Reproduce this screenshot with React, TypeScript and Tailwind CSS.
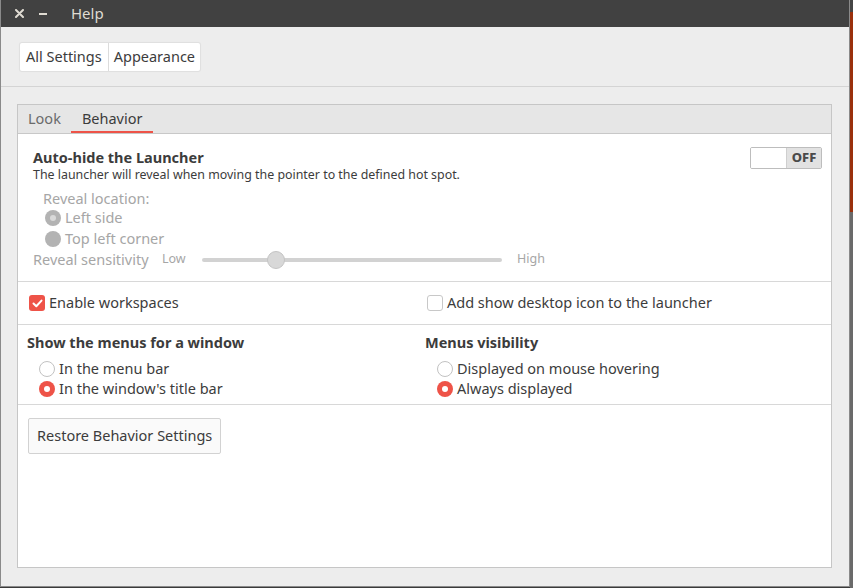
import React from "react";

const font = { fontFamily: '"Noto Sans", "Open Sans", sans-serif' };

function Radio({ checked, disabled }: { checked?: boolean; disabled?: boolean }) {
  if (disabled) {
    return (
      <span className="flex h-[16px] w-[16px] items-center justify-center rounded-full bg-[#b3b3b3]">
        {checked && <span className="h-[6px] w-[6px] rounded-full bg-[#d9d9d9]" />}
      </span>
    );
  }
  if (checked) {
    return (
      <span className="flex h-[16px] w-[16px] items-center justify-center rounded-full bg-[#ee5348]">
        <span className="h-[6px] w-[6px] rounded-full bg-white" />
      </span>
    );
  }
  return <span className="h-[16px] w-[16px] rounded-full border border-[#c2c2c2] bg-white" />;
}

function Checkbox({ checked }: { checked?: boolean }) {
  if (checked) {
    return (
      <span className="flex h-[16px] w-[16px] items-center justify-center rounded-[3px] bg-[#ee5348]">
        <svg width="11" height="9" viewBox="0 0 11 9">
          <path d="M1.5 4.5 L4.3 7.2 L9.5 1.6" stroke="white" strokeWidth="2" fill="none" strokeLinecap="round" strokeLinejoin="round" />
        </svg>
      </span>
    );
  }
  return <span className="h-[16px] w-[16px] rounded-[3px] border border-[#c8c8c8] bg-white" />;
}

export default function App() {
  return (
    <div className="flex h-[588px] w-[853px] bg-[#3a3a3a] text-[#3c3c3c]" style={font}>
      <div className="flex h-[587px] w-[850px] flex-col border-l border-r border-b border-[#8a8a8a] bg-[#ededed]">
        {/* title bar */}
        <div className="flex h-[27px] items-center bg-[#414141] text-[#dfdbd2]">
          <svg className="ml-[14px]" width="9" height="9" viewBox="0 0 9 9">
            <path d="M1 1 L8 8 M8 1 L1 8" stroke="#dfdbd2" strokeWidth="2" strokeLinecap="round" />
          </svg>
          <span className="ml-[15px] h-[2px] w-[8px] bg-[#dfdbd2]" />
          <span className="ml-[24px] text-[15px] leading-none">Help</span>
        </div>
        {/* header */}
        <div className="flex h-[60px] items-start border-b border-[#d4d4d4] pl-[19px] pt-[16px]">
          <div className="flex h-[28px] rounded-[2px] bg-white text-[14.5px] shadow-[0_0_1px_1px_rgba(0,0,0,0.06)]">
            <span className="flex items-center border-r border-[#dcdcdc] px-[6px]">All Settings</span>
            <span className="flex items-center px-[5px]">Appearance</span>
          </div>
        </div>
        {/* notebook */}
        <div className="ml-[16px] mt-[17px] flex h-[464px] w-[815px] flex-col border border-[#c6c6c6] bg-white">
          <div className="flex h-[29px] border-b border-[#c8c8c8] bg-[#e6e6e6] text-[14.5px]">
            <span className="flex items-center px-[10px] text-[#6b6b6b]">Look</span>
            <span className="flex items-center border-b-2 border-[#ee5348] px-[11px] pt-[2px]">Behavior</span>
          </div>
          {/* section 1 */}
          <div className="flex h-[148px] flex-col border-b border-[#d8d8d8] pl-[15px] pr-[9px] pt-[13px]">
            <div className="flex items-start justify-between">
              <div className="flex flex-col">
                <span className="text-[14.5px] font-bold leading-[20px]">Auto-hide the Launcher</span>
                <span className="text-[12.4px] leading-[15px]">The launcher will reveal when moving the pointer to the defined hot spot.</span>
              </div>
              <div className="flex h-[22px] w-[72px] overflow-hidden rounded-[2px] border border-[#bdbdbd]">
                <span className="w-[35px] bg-white" />
                <span className="flex flex-1 items-center justify-center border-l border-[#cfcfcf] bg-[#e2e2e2] text-[13px] font-extrabold text-[#4a4a4a]">OFF</span>
              </div>
            </div>
            <div className="mt-[7px] pl-[10px] text-[14.5px] leading-[19px] text-[#a6a6a6]">Reveal location:</div>
            <div className="flex h-[20px] items-center gap-[4px] pl-[12px] text-[14.5px] text-[#a6a6a6]">
              <Radio checked disabled />
              <span>Left side</span>
            </div>
            <div className="flex h-[21px] items-center gap-[4px] pl-[12px] text-[14.5px] text-[#a6a6a6]">
              <Radio disabled />
              <span>Top left corner</span>
            </div>
            <div className="flex h-[21px] items-center text-[14.5px] text-[#a6a6a6]">
              <span className="w-[129px]">Reveal sensitivity</span>
              <span className="w-[40px] text-[12.5px]">Low</span>
              <div className="relative h-[4px] w-[300px] rounded-full bg-[#d2d2d2]">
                <span className="absolute left-[65px] top-[-7px] h-[18px] w-[18px] rounded-full border border-[#c4c4c4] bg-[#d8d8d8]" />
              </div>
              <span className="ml-[15px] text-[12.5px]">High</span>
            </div>
          </div>
          {/* section 2 */}
          <div className="flex h-[43px] items-center border-b border-[#d8d8d8] text-[14.5px]">
            <div className="flex w-[409px] items-center gap-[4px] pl-[11px]">
              <Checkbox checked />
              <span>Enable workspaces</span>
            </div>
            <div className="flex items-center gap-[4px]">
              <Checkbox />
              <span>Add show desktop icon to the launcher</span>
            </div>
          </div>
          {/* section 3 */}
          <div className="flex h-[80px] border-b border-[#d8d8d8] pt-[7px] text-[14.5px]">
            <div className="flex w-[407px] flex-col pl-[9px]">
              <span className="font-bold leading-[20px]">Show the menus for a window</span>
              <div className="mt-[7px] flex h-[20px] items-center gap-[4px] pl-[12px]">
                <Radio />
                <span>In the menu bar</span>
              </div>
              <div className="flex h-[20px] items-center gap-[4px] pl-[12px]">
                <Radio checked />
                <span>In the window's title bar</span>
              </div>
            </div>
            <div className="flex flex-col">
              <span className="font-bold leading-[20px]">Menus visibility</span>
              <div className="mt-[7px] flex h-[20px] items-center gap-[4px] pl-[12px]">
                <Radio />
                <span>Displayed on mouse hovering</span>
              </div>
              <div className="flex h-[20px] items-center gap-[4px] pl-[12px]">
                <Radio checked />
                <span>Always displayed</span>
              </div>
            </div>
          </div>
          {/* section 4 */}
          <div className="pl-[10px] pt-[13px]">
            <button className="h-[36px] rounded-[2px] border border-[#d2d2d2] bg-[#fafafa] px-[8px] text-[14.5px] text-[#3c3c3c]" style={font}>
              Restore Behavior Settings
            </button>
          </div>
        </div>
      </div>
      <div className="flex w-[3px] flex-col">
        <div className="h-[12px] bg-[#454545]" />
        <div className="h-[200px] bg-[#9a300c]" />
        <div className="flex-1 bg-[#6a6a6a]" />
      </div>
    </div>
  );
}
